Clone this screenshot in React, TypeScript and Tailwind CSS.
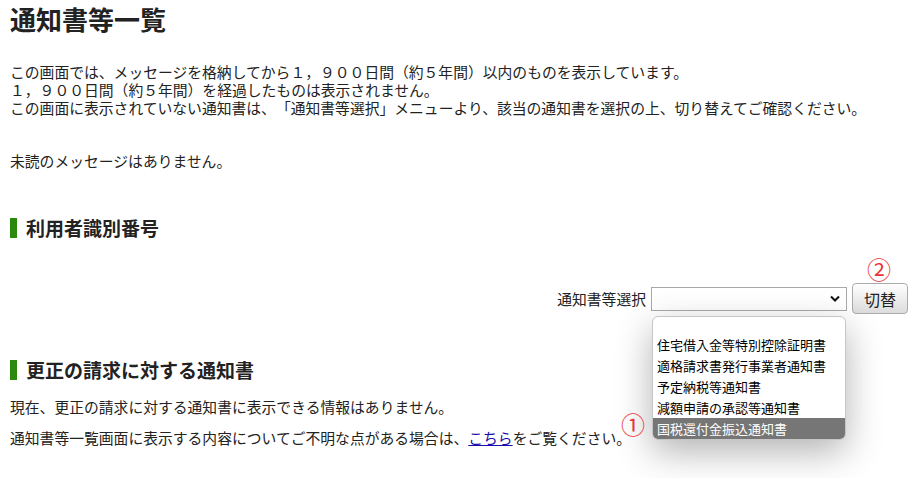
import React from 'react';

const options = [
  '',
  '住宅借入金等特別控除証明書',
  '適格請求書発行事業者通知書',
  '予定納税等通知書',
  '減額申請の承認等通知書',
  '国税還付金振込通知書',
];

function SectionHeading({ children }: { children: React.ReactNode }) {
  return (
    <div className="flex items-center gap-[9px] h-[20px]">
      <span className="w-[7px] h-[20px] bg-[#2b8a0e]" />
      <h2 className="text-[19px] leading-[20px] font-bold text-[#222]">{children}</h2>
    </div>
  );
}

export default function App() {
  const selected = 5;

  return (
    <div
      className="w-[922px] h-[478px] overflow-hidden bg-white pl-[10px] text-[#222] text-[14.8px] [text-spacing-trim:space-all]"
      style={{ fontFamily: '"Noto Sans CJK JP", "Noto Sans", sans-serif' }}
    >
      <h1 className="mt-[3px] text-[26px] leading-[32px] font-bold">通知書等一覧</h1>

      <div className="mt-[28px] leading-[18px]">
        <p>この画面では、メッセージを格納してから１，９００日間（約５年間）以内のものを表示しています。</p>
        <p>１，９００日間（約５年間）を経過したものは表示されません。</p>
        <p>この画面に表示されていない通知書は、「通知書等選択」メニューより、該当の通知書を選択の上、切り替えてご確認ください。</p>
      </div>

      <p className="mt-[35px] leading-[18px]">未読のメッセージはありません。</p>

      <div className="mt-[48px]">
        <SectionHeading>利用者識別番号</SectionHeading>
      </div>

      {/* selector row */}
      <div className="mt-[45px] flex items-center justify-end pr-[14px] h-[31px]">
        <label className="mr-[5px] leading-[18px]">通知書等選択</label>
        <div className="relative">
          <div className="w-[196px] h-[24px] border border-[#a9a9a9] bg-white flex items-center justify-end pr-[6px]">
            <svg width="10" height="7" viewBox="0 0 10 7">
              <path d="M1 1.5 L5 5.5 L9 1.5" fill="none" stroke="#111" strokeWidth="2" />
            </svg>
          </div>
          {/* open listbox */}
          <ul className="absolute left-[1px] top-[29px] w-[194px] bg-white border border-[#c6c6c6] rounded-[6px] overflow-hidden shadow-[0_12px_36px_rgba(0,0,0,0.3)] text-[13px] leading-[21px] z-10">
            {options.map((o, i) => (
              <li
                key={i}
                className={`${i === 0 ? 'h-[17px]' : 'h-[21px]'} px-[4px] whitespace-nowrap ${
                  i === selected ? 'bg-[#767676] text-white' : 'text-black'
                }`}
              >
                {o}
              </li>
            ))}
          </ul>
          <span className="absolute left-[-30px] top-[125px] text-[24px] leading-[24px] text-[#e8333a] z-20">①</span>
        </div>
        <div className="relative ml-[5px]">
          <button className="w-[56px] h-[31px] rounded-[4px] border border-[#ababab] bg-gradient-to-b from-white to-[#dcdcdc] text-[16px] text-[#222]">
            切替
          </button>
          <span className="absolute left-[15px] top-[-26px] text-[24px] leading-[24px] text-[#e8333a]">②</span>
        </div>
      </div>

      <div className="mt-[46px]">
        <SectionHeading>更正の請求に対する通知書</SectionHeading>
      </div>

      <p className="mt-[18px] leading-[18px]">現在、更正の請求に対する通知書に表示できる情報はありません。</p>
      <p className="mt-[13px] leading-[18px]">
        通知書等一覧画面に表示する内容についてご不明な点がある場合は、
        <a href="#" className="text-[#1a0dab] underline">こちら</a>
        をご覧ください。
      </p>
    </div>
  );
}
